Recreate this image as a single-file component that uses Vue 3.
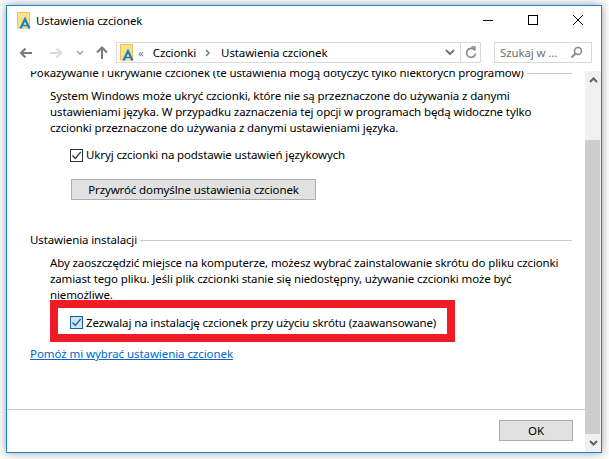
<script setup>
</script>

<template>
  <div class="page">
    <div class="window">
      <header class="titlebar">
        <svg class="fileicon" width="14" height="17" viewBox="0 0 14 17">
          <rect x="0.5" y="0.5" width="12" height="15.5" fill="#fde08c" stroke="#e8c45c" />
          <path d="M3.5 16.5 L8 7 L12.5 16.5" fill="none" stroke="#1a7fc4" stroke-width="2.2" />
          <path d="M5.5 13.5 H10.5" stroke="#1a7fc4" stroke-width="1.4" />
        </svg>
        <span class="title">Ustawienia czcionek</span>
        <span class="winbtns">
          <svg width="12" height="12" viewBox="0 0 12 12"><path d="M1 6.5 H11" stroke="#000" /></svg>
          <svg width="12" height="12" viewBox="0 0 12 12"><rect x="1.5" y="1.5" width="9" height="9" fill="none" stroke="#000" /></svg>
          <svg width="12" height="12" viewBox="0 0 12 12"><path d="M1 1 L11 11 M11 1 L1 11" stroke="#000" /></svg>
        </span>
      </header>

      <nav class="navbar">
        <svg class="nav back" width="14" height="12" viewBox="0 0 14 12"><path d="M13 6 H2 M6.5 1.5 L2 6 L6.5 10.5" fill="none" stroke="#7a7a7a" stroke-width="2" /></svg>
        <svg class="nav fwd" width="14" height="12" viewBox="0 0 14 12"><path d="M1 6 H12 M7.5 1.5 L12 6 L7.5 10.5" fill="none" stroke="#d9d9d9" stroke-width="2" /></svg>
        <svg class="nav drop" width="8" height="6" viewBox="0 0 8 6"><path d="M1 1 L4 4 L7 1" fill="none" stroke="#a8a8a8" stroke-width="1.6" /></svg>
        <svg class="nav up" width="14" height="14" viewBox="0 0 14 14"><path d="M7 13 V2 M2 6.5 L7 1.5 L12 6.5" fill="none" stroke="#7a7a7a" stroke-width="2" /></svg>
        <div class="address">
          <svg class="addricon" width="14" height="17" viewBox="0 0 14 17">
            <rect x="0.5" y="0.5" width="12" height="15.5" fill="#fde08c" stroke="#e8c45c" />
            <path d="M3.5 16.5 L8 7 L12.5 16.5" fill="none" stroke="#1a7fc4" stroke-width="2.2" />
            <path d="M5.5 13.5 H10.5" stroke="#1a7fc4" stroke-width="1.4" />
          </svg>
          <span class="crumbs-more">«</span>
          <span class="crumb">Czcionki</span>
          <svg class="sep" width="5" height="8" viewBox="0 0 5 8"><path d="M1 1 L4 4 L1 7" fill="none" stroke="#777" stroke-width="1.5" /></svg>
          <span class="crumb">Ustawienia czcionek</span>
          <svg class="addrdrop" width="10" height="7" viewBox="0 0 10 7"><path d="M1 1 L5 5 L9 1" fill="none" stroke="#777" stroke-width="2" /></svg>
          <span class="refresh">
            <svg width="12" height="13" viewBox="0 0 12 13"><path d="M9.5 4 A4.5 4.5 0 1 0 10.5 7.5 M6.5 1 L9.8 1 L9.8 4.5" fill="none" stroke="#888" stroke-width="1.7" /></svg>
          </span>
        </div>
        <div class="search">
          <span>Szukaj w ...</span>
          <svg width="13" height="13" viewBox="0 0 13 13"><circle cx="8" cy="5" r="3.5" fill="none" stroke="#888" stroke-width="1.6" /><path d="M5.5 7.5 L1.5 11.5" stroke="#888" stroke-width="2" /></svg>
        </div>
      </nav>

      <div class="body">
        <main class="main">
          <div class="scrollarea">
            <div class="group-head first">
              <span>Pokazywanie i ukrywanie czcionek (te ustawienia mogą dotyczyć tylko niektórych programów)</span>
              <i></i>
            </div>
            <p class="para p1">System Windows może ukryć czcionki, które nie są przeznaczone do używania z danymi<br />ustawieniami języka. W przypadku zaznaczenia tej opcji w programach będą widoczne tylko<br />czcionki przeznaczone do używania z danymi ustawieniami języka.</p>
            <label class="check c1">
              <span class="box">
                <svg width="11" height="11" viewBox="0 0 11 11"><path d="M1.5 5.5 L4.3 8.5 L9.8 1.8" fill="none" stroke="#333" stroke-width="1.3" /></svg>
              </span>
              <span>Ukryj czcionki na podstawie ustawień językowych</span>
            </label>
            <button class="btn restore">Przywróć domyślne ustawienia czcionek</button>
            <div class="group-head second">
              <span>Ustawienia instalacji</span>
              <i></i>
            </div>
            <p class="para p2">Aby zaoszczędzić miejsce na komputerze, możesz wybrać zainstalowanie skrótu do pliku czcionki<br />zamiast tego pliku. Jeśli plik czcionki stanie się niedostępny, używanie czcionki może być<br />niemożliwe.</p>
            <div class="highlight">
              <label class="check c2">
                <span class="box blue">
                  <svg width="11" height="11" viewBox="0 0 11 11"><path d="M1.5 5.5 L4.3 8.5 L9.8 1.8" fill="none" stroke="#1d5f94" stroke-width="1.3" /></svg>
                </span>
                <span>Zezwalaj na instalację czcionek przy użyciu skrótu (zaawansowane)</span>
              </label>
            </div>
            <a class="link">Pomóż mi wybrać ustawienia czcionek</a>
          </div>
          <footer class="footer">
            <button class="btn ok">OK</button>
          </footer>
        </main>
        <aside class="scrollbar">
          <svg class="arrow" width="9" height="6" viewBox="0 0 9 6"><path d="M1 5 L4.5 1.5 L8 5" fill="none" stroke="#606060" stroke-width="2" /></svg>
          <div class="track"></div>
          <div class="thumb"></div>
          <svg class="arrow" width="9" height="6" viewBox="0 0 9 6"><path d="M1 1 L4.5 4.5 L8 1" fill="none" stroke="#606060" stroke-width="2" /></svg>
        </aside>
      </div>
    </div>
  </div>
</template>

<style>
html, body { margin: 0; background: #fff; }
</style>

<style scoped>
.page {
  width: 609px;
  height: 459px;
  padding: 5px 7px 6px 6px;
  box-sizing: border-box;
  overflow: hidden;
  font-family: "Noto Sans", "Open Sans", sans-serif;
  font-size: 11.5px;
  letter-spacing: -0.12px;
  color: #000;
}
.window {
  height: 100%;
  box-sizing: border-box;
  border: 1px solid #1883d7;
  background: #fff;
  box-shadow: 0 0 9px rgba(0, 0, 0, .4);
  display: flex;
  flex-direction: column;
}
.titlebar {
  height: 31px;
  box-sizing: border-box;
  flex: none;
  display: flex;
  align-items: center;
  padding: 0 17px 3px 10px;
}
.title { margin-left: 5px; }
.winbtns { margin-left: auto; display: flex; gap: 33px; }
.navbar {
  height: 34px;
  flex: none;
  display: flex;
  align-items: center;
  padding: 5px 0 8px;
  box-sizing: border-box;
}
.nav { flex: none; }
.back { margin-left: 12px; }
.fwd { margin-left: 16px; }
.drop { margin-left: 13px; }
.up { margin-left: 11px; }
.address {
  margin-left: 7px;
  width: 365px;
  height: 21px;
  box-sizing: border-box;
  border: 1px solid #d9d9d9;
  display: flex;
  align-items: center;
  padding-left: 3px;
}
.crumbs-more { margin: 0 9px 0 4px; color: #777; }
.sep { margin: 0 11px 0 9px; }
.addrdrop { margin-left: auto; margin-right: 5px; }
.refresh {
  width: 19px;
  height: 100%;
  border-left: 1px solid #d9d9d9;
  display: flex;
  align-items: center;
  justify-content: center;
}
.search {
  margin-left: 13px;
  width: 98px;
  height: 21px;
  box-sizing: border-box;
  border: 1px solid #d9d9d9;
  display: flex;
  align-items: center;
  justify-content: space-between;
  padding: 0 8px 0 5px;
  color: #707070;
}
.body { flex: 1; min-height: 0; display: flex; }
.main { flex: 1; min-width: 0; display: flex; flex-direction: column; }
.scrollarea { flex: 1; min-height: 0; overflow: hidden; padding-left: 23px; padding-right: 13px; }
.group-head { display: flex; align-items: center; line-height: 16px; white-space: nowrap; }
.group-head i { flex: 1; height: 1px; background: #c8c8c8; margin-left: 3px; margin-top: 1px; }
.group-head.first { margin-top: -6px; }
.group-head.second { margin-top: 32px; }
.para { margin: 0 0 0 20px; line-height: 16px; white-space: nowrap; }
.p1 { margin-top: 7px; }
.p2 { margin-top: 7px; }
.check { display: flex; align-items: center; line-height: 16px; white-space: nowrap; }
.c1 { margin: 11px 0 0 40px; }
.c2 { margin-top: 3px; }
.box {
  width: 13px;
  height: 13px;
  box-sizing: border-box;
  border: 1px solid #333;
  margin-right: 3px;
  display: flex;
  align-items: center;
  justify-content: center;
  flex: none;
}
.box.blue { border-color: #1d5f94; background: #cde4f7; }
.btn {
  font: inherit;
  letter-spacing: inherit;
  color: #000;
  background: #e1e1e1;
  border: 1px solid #adadad;
  padding: 0;
  box-sizing: border-box;
  height: 21px;
  display: block;
}
.restore { width: 245px; margin: 16px 0 0 41px; }
.highlight {
  margin: -3px 0 0 20px;
  width: 405px;
  height: 42px;
  box-sizing: border-box;
  border: 8px solid #ee1c25;
  display: flex;
  align-items: center;
  padding-left: 12px;
}
.link {
  display: block;
  margin-top: 4px;
  line-height: 16px;
  letter-spacing: -0.07px;
  color: #0066cc;
  text-decoration: underline;
  white-space: nowrap;
}
.footer {
  flex: none;
  height: 43px;
  box-sizing: border-box;
  border-top: 1px solid #c8c8c8;
  display: flex;
  justify-content: flex-end;
  align-items: flex-start;
  padding: 10px 12px 0 0;
}
.ok { width: 74px; }
.scrollbar {
  flex: none;
  width: 16px;
  background: #f0f0f0;
  display: flex;
  flex-direction: column;
  align-items: center;
}
.arrow { flex: none; margin: 6px 0; }
.track { height: 51px; flex: none; }
.thumb { flex: 1; width: 15px; align-self: flex-start; background: #cdcdcd; }
</style>
